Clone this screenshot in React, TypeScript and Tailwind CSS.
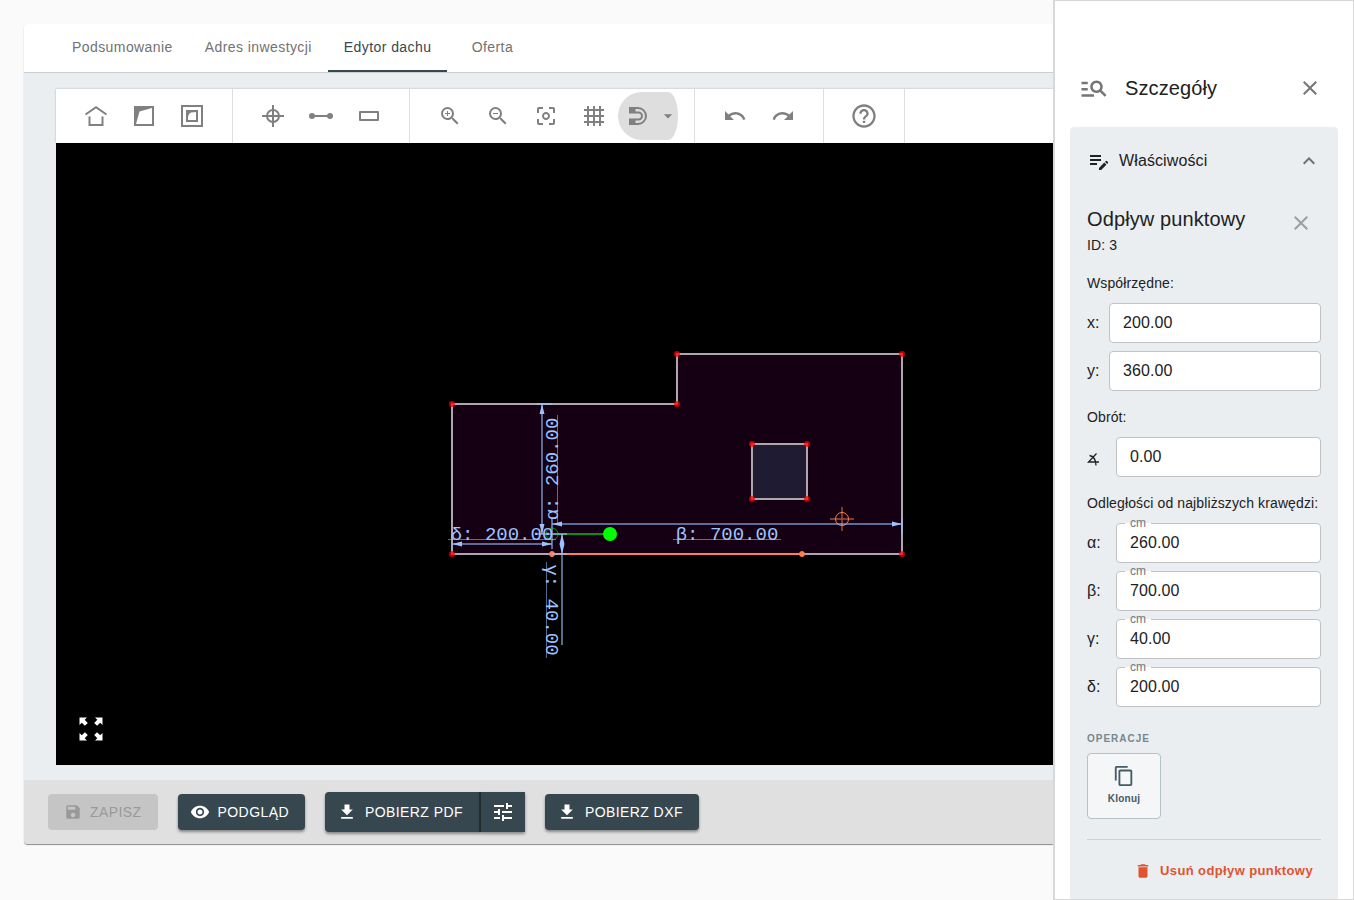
import { ReactNode, useState } from 'react'
import {
    MdArrowDropDown, MdCenterFocusWeak, MdClose, MdContentCopy, MdDelete, MdEditNote, MdExpandLess, MdFileDownload,
    MdHelpOutline, MdManageSearch, MdRedo, MdSave, MdTune, MdUndo, MdVisibility, MdZoomIn, MdZoomOut
} from 'react-icons/md'

interface ToolProps {
    label: string,
    children: ReactNode
}

interface FieldProps {
    id: string,
    label: ReactNode,
    value: string,
    unit?: string,
    wide?: boolean,
    onChange: (id: string, value: string) => void
}

interface PointProps {
    x: number,
    y: number
}

const tabs = ['Podsumowanie', 'Adres inwestycji', 'Edytor dachu', 'Oferta']

const corners: PointProps[] = [
    { x: 452, y: 404 }, { x: 677, y: 404 }, { x: 677, y: 354 }, { x: 902, y: 354 }, { x: 902, y: 554 }, { x: 452, y: 554 },
    { x: 752, y: 444 }, { x: 807, y: 444 }, { x: 752, y: 499 }, { x: 807, y: 499 },
]

const HouseIcon = () => (
    <svg width="24" height="24" viewBox="0 0 24 24" fill="none" stroke="currentColor" strokeWidth="2">
        <path d="M1.5 10.5 12 3.2l10.5 7.3M5.5 12.5V21h13v-8.500" />
    </svg>
)

const SlopeIcon = () => (
    <svg width="24" height="24" viewBox="0 0 24 24" fill="currentColor" fillRule="evenodd">
        <path d="M2 2h20v20H2zM20 4 7.500 7.500 4 20h16z" />
    </svg>
)

const FrameIcon = () => (
    <svg width="24" height="24" viewBox="0 0 24 24" fill="currentColor" fillRule="evenodd">
        <path d="M1 1h22v22H1zM3 3v18h18V3zM6 6h12v12H6zM16 8l-5 .6Q8.500 9.500 8 13v3h8z" />
    </svg>
)

const DrainIcon = () => (
    <svg width="24" height="24" viewBox="0 0 24 24" fill="none" stroke="currentColor" strokeWidth="2">
        <circle cx="12" cy="12" r="6" />
        <path d="M12 1v22M1 12h22" />
    </svg>
)

const SegmentIcon = () => (
    <svg width="24" height="24" viewBox="0 0 24 24" fill="currentColor" overflow="visible">
        <circle cx="3" cy="12" r="3" />
        <circle cx="21" cy="12" r="3" />
        <path d="M3 11h18v2H3z" />
    </svg>
)

const RectIcon = () => (
    <svg width="24" height="24" viewBox="0 0 24 24" fill="none" stroke="currentColor" strokeWidth="2" strokeLinejoin="round">
        <rect x="3" y="8" width="18" height="8" />
    </svg>
)

const GridIcon = () => (
    <svg width="24" height="24" viewBox="0 0 24 24" fill="none" stroke="currentColor" strokeWidth="2">
        <path d="M6 2v20M12 2v20M18 2v20M2 6h20M2 12h20M2 18h20" />
    </svg>
)

const MagnetIcon = () => (
    <svg width="24" height="24" viewBox="0 0 24 24" fill="none" stroke="currentColor" strokeWidth="2">
        <path d="M3 4h9a8 8 0 0 1 0 16H3M9 8.500h3.500a3.500 3.500 0 0 1 0 7H9" />
        <path fill="currentColor" stroke="none" d="M3 3h6.500v6.500H3zM3 14.500h6.500V21H3z" />
    </svg>
)

const ExpandIcon = () => (
    <svg width="24" height="24" viewBox="0 0 24 24" fill="currentColor">
        <path d="M.5.5H8L5.700 2.800l3.100 3.100-2.900 2.900-3.100-3.100L.5 8z" />
        <path d="M23.500.5H16l2.300 2.300-3.100 3.100 2.900 2.900 3.100-3.100L23.500 8z" />
        <path d="M.5 23.500H8l-2.300-2.300 3.100-3.100-2.900-2.900-3.100 3.100L.5 16z" />
        <path d="M23.500 23.500H16l2.300-2.300-3.100-3.100 2.900-2.900 3.100 3.100L23.500 16z" />
    </svg>
)

const AngleIcon = () => (
    <svg width="12" height="14" viewBox="0 0 12 14" fill="none" stroke="currentColor" strokeWidth="1.300" className="mt-1">
        <title>Kąt</title>
        <path d="M12 10H1.500L9.500 1.500M2.500 3.500C6 4 8.800 7.500 9 13.500" />
    </svg>
)

const Tool = ({ label, children }: ToolProps) => (
    <button aria-label={label} className="flex h-12 w-12 items-center justify-center rounded-full hover:bg-black/5">
        {children}
    </button>
)

const ToolGroup = ({ children }: { children: ReactNode }) => (
    <div className="flex shrink-0 items-center border-r border-[#dedede] px-4">{children}</div>
)

const Field = ({ id, label, value, unit, wide, onChange }: FieldProps) => (
    <div className="flex items-center">
        <label htmlFor={id} className={`shrink-0 text-base ${wide ? 'w-[22px]' : 'w-[29px]'}`}>{label}</label>
        <div className="relative flex-1">
            <input
                id={id}
                value={value}
                onChange={(e) => onChange(id, e.target.value)}
                className="block h-10 w-full rounded border border-[#c0c2c4] bg-white px-[13px] text-base outline-none focus:border-[#37474f]"
            />
            {unit && (
                <div className="absolute left-[9px] top-0 h-px bg-white px-[5px]">
                    <span className="block -translate-y-1/2 text-xs leading-3 text-[#75777a]">{unit}</span>
                </div>
            )}
        </div>
    </div>
)

const RoofDrawing = () => (
    <svg className="block h-full w-full" aria-label="Rzut dachu">
        <g transform="translate(-56 -143)">
            <path d="M452 404h225v-50h225v200H452z" fill="#150013" stroke="#aea7ae" strokeWidth="2" />
            <rect x="752" y="444" width="55" height="55" fill="#1f1b33" stroke="#aea7ae" strokeWidth="2" />
            {corners.map((p) => (
                <circle key={`${p.x}-${p.y}`} cx={p.x} cy={p.y} r="3" fill="#ff0000" opacity="0.75" />
            ))}

            <g stroke="#ff7f50" fill="none">
                <path d="M552 554h250" strokeWidth="2" />
                <path d="M830 519h24M842 507v24" strokeWidth="1.500" opacity="0.6" />
                <circle cx="842" cy="519" r="6.500" />
                <circle cx="552" cy="554" r="2.500" fill="#ff7f50" />
                <circle cx="802" cy="554" r="2.500" fill="#ff7f50" />
            </g>

            <circle cx="552" cy="534" r="6" fill="none" stroke="#0a8a10" />
            <path d="M552 534h52" stroke="#0c8f12" strokeWidth="2" />
            <circle cx="610" cy="534" r="7" fill="#00ff00" />

            <g stroke="#9dc3ff" strokeOpacity="0.55" strokeWidth="2" fill="none">
                <path d="M542 404v130M552 524h350M452 544h100M562 534v111" />
                <path d="M537 404h15M535 534h32M552 554h15M552 519v30M902 519v15" />
            </g>
            <g stroke="#9dc3ff" strokeOpacity="0.55">
                <path d="M557.500 415v108M673 539.500h108M448 539.500h108M546.500 562v96" />
            </g>
            <g fill="#9dc3ff">
                <path d="M542 404l2.500 10h-5zM542 534l2.500-10h-5z" />
                <path d="M552 524l10-2.500v5zM902 524l-10-2.500v5z" />
                <path d="M452 544l10-2.500v5zM552 544l-10-2.500v5z" />
                <path d="M562 534l2.500 10-2.500 10-2.500-10z" />
            </g>
            <g fill="#9dc3ff" fontSize="19" textAnchor="middle" className="font-['Liberation_Mono',monospace]">
                <text transform="translate(558 469) rotate(-90)">α: 260.00</text>
                <text x="727" y="540">β: 700.00</text>
                <text transform="translate(546 610) rotate(90)">γ: 40.00</text>
                <text x="502" y="540">δ: 200.00</text>
            </g>
        </g>
    </svg>
)

export default function App() {
    const [activeTab, setActiveTab] = useState('Edytor dachu')
    const [values, setValues] = useState<Record<string, string>>({
        x: '200.00',
        y: '360.00',
        angle: '0.00',
        alpha: '260.00',
        beta: '700.00',
        gamma: '40.00',
        delta: '200.00',
    })

    const handleChange = (id: string, value: string) => {
        setValues((prev) => ({ ...prev, [id]: value }))
    }

    const buttonClass = 'flex shrink-0 items-center gap-2 bg-[#37474f] text-sm tracking-[0.03em] text-white shadow-[0_2px_3px_rgba(0,0,0,0.4)]'

    return (
        <div className="flex h-screen bg-[#fafafa] font-['Liberation_Sans',Arial,sans-serif] text-[#212121]">
            <main className="flex min-w-0 flex-1 flex-col overflow-hidden pb-14 pl-6 pt-6">
                <div className="flex min-h-0 flex-1 flex-col overflow-hidden rounded-l bg-[#eaeef1] shadow-[0_1px_1px_rgba(0,0,0,0.45)]">
                    <nav className="flex h-[49px] shrink-0 border-b border-[#cccfd1] bg-white pl-8">
                        {tabs.map((tab) => (
                            <button
                                key={tab}
                                onClick={() => setActiveTab(tab)}
                                className={`h-12 min-w-[90px] border-b-2 px-4 text-sm tracking-[0.03em] ${activeTab === tab ? 'border-[#37474f] text-[#37474f]' : 'border-transparent text-[#727272]'}`}
                            >
                                {tab}
                            </button>
                        ))}
                    </nav>

                    <div className="flex min-h-0 flex-1 flex-col pb-[15px] pl-8 pt-4">
                        <div className="flex h-[54px] shrink-0 overflow-hidden bg-white text-[#808080] shadow-[0_0_2px_rgba(0,0,0,0.25)]">
                            <ToolGroup>
                                <Tool label="Dach"><HouseIcon /></Tool>
                                <Tool label="Połać"><SlopeIcon /></Tool>
                                <Tool label="Otwór"><FrameIcon /></Tool>
                            </ToolGroup>
                            <ToolGroup>
                                <Tool label="Odpływ punktowy"><DrainIcon /></Tool>
                                <Tool label="Odpływ liniowy"><SegmentIcon /></Tool>
                                <Tool label="Prostokąt"><RectIcon /></Tool>
                            </ToolGroup>
                            <ToolGroup>
                                <Tool label="Powiększ"><MdZoomIn size={24} /></Tool>
                                <Tool label="Pomniejsz"><MdZoomOut size={24} /></Tool>
                                <Tool label="Wyśrodkuj"><MdCenterFocusWeak size={24} /></Tool>
                                <Tool label="Siatka"><GridIcon /></Tool>
                                <button aria-label="Przyciąganie" className="flex h-12 w-[60px] items-center justify-between rounded-[24px_10px_10px_24px/24px] bg-[#dedede] pl-2">
                                    <MagnetIcon />
                                    <MdArrowDropDown size={20} />
                                </button>
                            </ToolGroup>
                            <ToolGroup>
                                <Tool label="Cofnij"><MdUndo size={24} /></Tool>
                                <Tool label="Ponów"><MdRedo size={24} /></Tool>
                            </ToolGroup>
                            <ToolGroup>
                                <Tool label="Pomoc"><MdHelpOutline size={28} /></Tool>
                            </ToolGroup>
                        </div>
                        <div className="relative min-h-0 flex-1 overflow-hidden bg-black">
                            <RoofDrawing />
                            <button aria-label="Pełny ekran" className="absolute bottom-6 left-[23px] text-white">
                                <ExpandIcon />
                            </button>
                        </div>
                    </div>

                    <footer className="flex h-16 shrink-0 items-center gap-5 bg-[#e0e0e0] px-6">
                        <button disabled className="flex h-9 items-center gap-2 rounded bg-[#c5c5c5] px-4 text-sm tracking-[0.03em] text-[#999999]">
                            <MdSave size={18} />
                            ZAPISZ
                        </button>
                        <button className={`${buttonClass} h-9 rounded pl-3 pr-4`}>
                            <MdVisibility size={20} />
                            PODGLĄD
                        </button>
                        <div className="flex">
                            <button className={`${buttonClass} h-10 rounded-l border-r-2 border-[#263238] pl-3 pr-4`}>
                                <MdFileDownload size={20} />
                                POBIERZ PDF
                            </button>
                            <button aria-label="Ustawienia PDF" className={`${buttonClass} h-10 px-[10px]`}>
                                <MdTune size={24} />
                            </button>
                        </div>
                        <button className={`${buttonClass} h-9 rounded pl-3 pr-4`}>
                            <MdFileDownload size={20} />
                            POBIERZ DXF
                        </button>
                    </footer>
                </div>
            </main>

            <aside className="flex w-[301px] shrink-0 flex-col overflow-hidden border border-l-2 border-[#d8d8d8] bg-white px-[15px] pt-[63px] tracking-[0.007em]">
                <div className="flex h-12 shrink-0 items-center pl-[9px]">
                    <MdManageSearch size={30} className="text-[#757575]" />
                    <h1 className="flex-1 pl-4 text-xl">Szczegóły</h1>
                    <button aria-label="Zamknij panel" className="pr-4 text-[#757575]">
                        <MdClose size={24} />
                    </button>
                </div>

                <section className="mt-[15px] flex flex-1 flex-col rounded-t-sm bg-[#eaeef1] px-[17px] pt-[10px]">
                    <button className="flex h-12 items-center text-base" aria-expanded="true">
                        <MdEditNote size={24} />
                        <span className="flex-1 pl-2 text-left">Właściwości</span>
                        <MdExpandLess size={24} className="text-[#6d7073]" />
                    </button>

                    <div className="mt-[18px] flex items-start justify-between">
                        <div>
                            <h2 className="text-xl leading-8">Odpływ punktowy</h2>
                            <p className="text-sm leading-5">ID: 3</p>
                        </div>
                        <button aria-label="Odznacz" className="pr-2 pt-2 text-[#9b9ea0]">
                            <MdClose size={24} />
                        </button>
                    </div>

                    <h3 className="mt-[18px] text-sm leading-5">Współrzędne:</h3>
                    <div className="mt-[10px] flex flex-col gap-2">
                        <Field id="x" label="x:" value={values.x} wide onChange={handleChange} />
                        <Field id="y" label="y:" value={values.y} wide onChange={handleChange} />
                    </div>

                    <h3 className="mt-4 text-sm leading-5">Obrót:</h3>
                    <div className="mt-[10px]">
                        <Field id="angle" label={<AngleIcon />} value={values.angle} onChange={handleChange} />
                    </div>

                    <h3 className="mt-4 whitespace-nowrap text-sm leading-5">Odległości od najbliższych krawędzi:</h3>
                    <div className="mt-[10px] flex flex-col gap-2">
                        <Field id="alpha" label="α:" value={values.alpha} unit="cm" onChange={handleChange} />
                        <Field id="beta" label="β:" value={values.beta} unit="cm" onChange={handleChange} />
                        <Field id="gamma" label="γ:" value={values.gamma} unit="cm" onChange={handleChange} />
                        <Field id="delta" label="δ:" value={values.delta} unit="cm" onChange={handleChange} />
                    </div>

                    <h4 className="mt-6 text-[10px] font-bold leading-4 tracking-widest text-[#78878f]">OPERACJE</h4>
                    <button className="mt-[6px] flex h-[66px] w-[74px] flex-col items-center justify-center gap-1 rounded border border-[#b4c1c5] bg-[#f4f6f8] text-[10px] font-bold leading-4 tracking-wide text-[#455a64]">
                        <MdContentCopy size={22} />
                        Klonuj
                    </button>

                    <div className="mt-5 flex justify-end border-t border-[#cbd1d4] pr-2 pt-[21px]">
                        <button className="flex items-center gap-2 text-[13px] font-bold leading-5 tracking-[0.03em] text-[#e05330]">
                            <MdDelete size={18} />
                            Usuń odpływ punktowy
                        </button>
                    </div>
                </section>
            </aside>
        </div>
    )
}
